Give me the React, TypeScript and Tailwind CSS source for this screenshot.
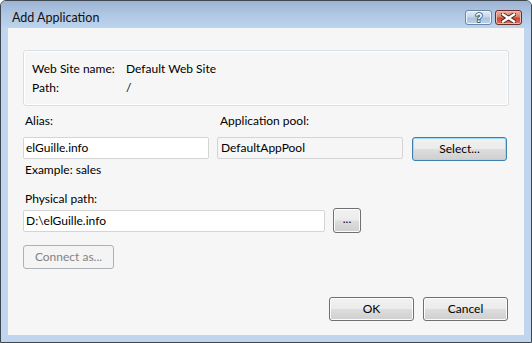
import React from "react";

const font = { fontFamily: "Lato, 'Open Sans', sans-serif" };

function Btn({
  children,
  className = "",
  focused = false,
}: {
  children: React.ReactNode;
  className?: string;
  focused?: boolean;
}) {
  return (
    <button
      className={
        "flex items-center justify-center rounded-[3px] border text-[12px] text-black bg-[linear-gradient(to_bottom,#f2f2f2_0%,#ebebeb_48%,#dddddd_52%,#cfcfcf_100%)] " +
        (focused
          ? "border-[#3c7fb1] shadow-[inset_0_0_0_1px_#9ddcf7] "
          : "border-[#707070] shadow-[inset_0_0_0_1px_#fcfcfc] ") +
        className
      }
    >
      {children}
    </button>
  );
}

function TitleButtons() {
  return (
    <div className="flex gap-[3px]">
      <div className="flex h-[15px] w-[27px] items-center justify-center rounded-[3px] border border-[#6d84a3] bg-[linear-gradient(to_bottom,#e1ebf6_0%,#c4d6ec_48%,#a9c2e0_52%,#bcd2ea_100%)] shadow-[inset_0_0_0_1px_#eef4fb]">
        <svg width="12" height="13" viewBox="0 0 12 13">
          <text
            x="6"
            y="11"
            textAnchor="middle"
            fontSize="12"
            fontWeight="bold"
            fontFamily="'Liberation Sans', sans-serif"
            fill="#ffffff"
            stroke="#3b4a5c"
            strokeWidth="1.6"
            paintOrder="stroke"
          >
            ?
          </text>
        </svg>
      </div>
      <div className="flex h-[15px] w-[27px] items-center justify-center rounded-[3px] border border-[#6b2c2c] bg-[linear-gradient(to_bottom,#eab0a1_0%,#d97c69_48%,#c6442f_52%,#d8735a_100%)] shadow-[inset_0_0_0_1px_#f0b8ab]">
        <svg width="15" height="10" viewBox="0 0 15 10">
          <path d="M2 1.5 L13 8.5 M13 1.5 L2 8.5" stroke="#4a2a26" strokeWidth="4.2" strokeLinecap="square" />
          <path d="M2 1.5 L13 8.5 M13 1.5 L2 8.5" stroke="#ffffff" strokeWidth="2.4" strokeLinecap="square" />
        </svg>
      </div>
    </div>
  );
}

export default function App() {
  return (
    <div
      className="flex h-[343px] w-[532px] flex-col overflow-hidden rounded-t-[6px] border border-[#3e4650] bg-[#bfd6ee] text-[12px] text-black"
      style={font}
    >
      {/* title bar */}
      <div className="flex h-[27px] shrink-0 items-start justify-between bg-[linear-gradient(to_bottom,#9cb4d3_0%,#aec6e2_45%,#bcd4ed_100%)] pl-[11px] pr-[9px]">
        <span className="mt-[9px] text-[12.5px] leading-[16px] text-[#111]">Add Application</span>
        <div className="mt-[9px]">
          <TitleButtons />
        </div>
      </div>

      {/* client area */}
      <div className="mx-[7px] mb-[7px] flex flex-1 flex-col bg-[#f6f6f6] pl-[15px] pr-[15px]">
        <div className="mt-[22px] h-[56px] rounded-[3px] border border-[#d5dfe5] px-[8px] pt-[10px] shadow-[inset_0_0_0_1px_#ffffff]">
          <div className="grid grid-cols-[94px_1fr] gap-y-[3px] leading-[16px]">
            <span>Web Site name:</span>
            <span>Default Web Site</span>
            <span>Path:</span>
            <span>/</span>
          </div>
        </div>

        <div className="flex items-start">
          <div className="flex w-[186px] flex-col">
            <span className="mt-[7px] pl-[2px] leading-[16px]">Alias:</span>
            <div className="mt-[8px] flex h-[22px] items-center rounded-[2px] border border-[#d4d4d4] bg-white pl-[2px]">
              elGuille.info
            </div>
          </div>
          <div className="ml-[8px] flex w-[186px] flex-col">
            <span className="mt-[7px] pl-[3px] leading-[16px]">Application pool:</span>
            <div className="mt-[8px] flex h-[22px] items-center rounded-[2px] border border-[#d4d4d4] bg-[#f6f6f6] pl-[3px]">
              DefaultAppPool
            </div>
          </div>
          <Btn focused className="ml-[9px] mt-[31px] h-[24px] w-[95px]">
            Select...
          </Btn>
        </div>

        <span className="mt-[1px] pl-[2px] leading-[16px]">Example: sales</span>
        <span className="mt-[13px] pl-[2px] leading-[16px]">Physical path:</span>

        <div className="mt-[1px] flex items-center">
          <div className="flex h-[22px] w-[302px] items-center rounded-[2px] border border-[#d4d4d4] bg-white pl-[2px]">
            D:\elGuille.info
          </div>
          <Btn className="ml-[8px] h-[25px] w-[28px] pb-[3px] text-[11px]">...</Btn>
        </div>

        <div className="mt-[12px] flex h-[24px] w-[91px] items-center justify-center rounded-[3px] border border-[#adb2b5] bg-[#f4f4f4] text-[#838383]">
          Connect as...
        </div>

        <div className="mt-auto mb-[14px] mr-[1px] flex justify-end gap-[9px]">
          <Btn className="h-[24px] w-[85px]">OK</Btn>
          <Btn className="h-[24px] w-[85px]">Cancel</Btn>
        </div>
      </div>
    </div>
  );
}
